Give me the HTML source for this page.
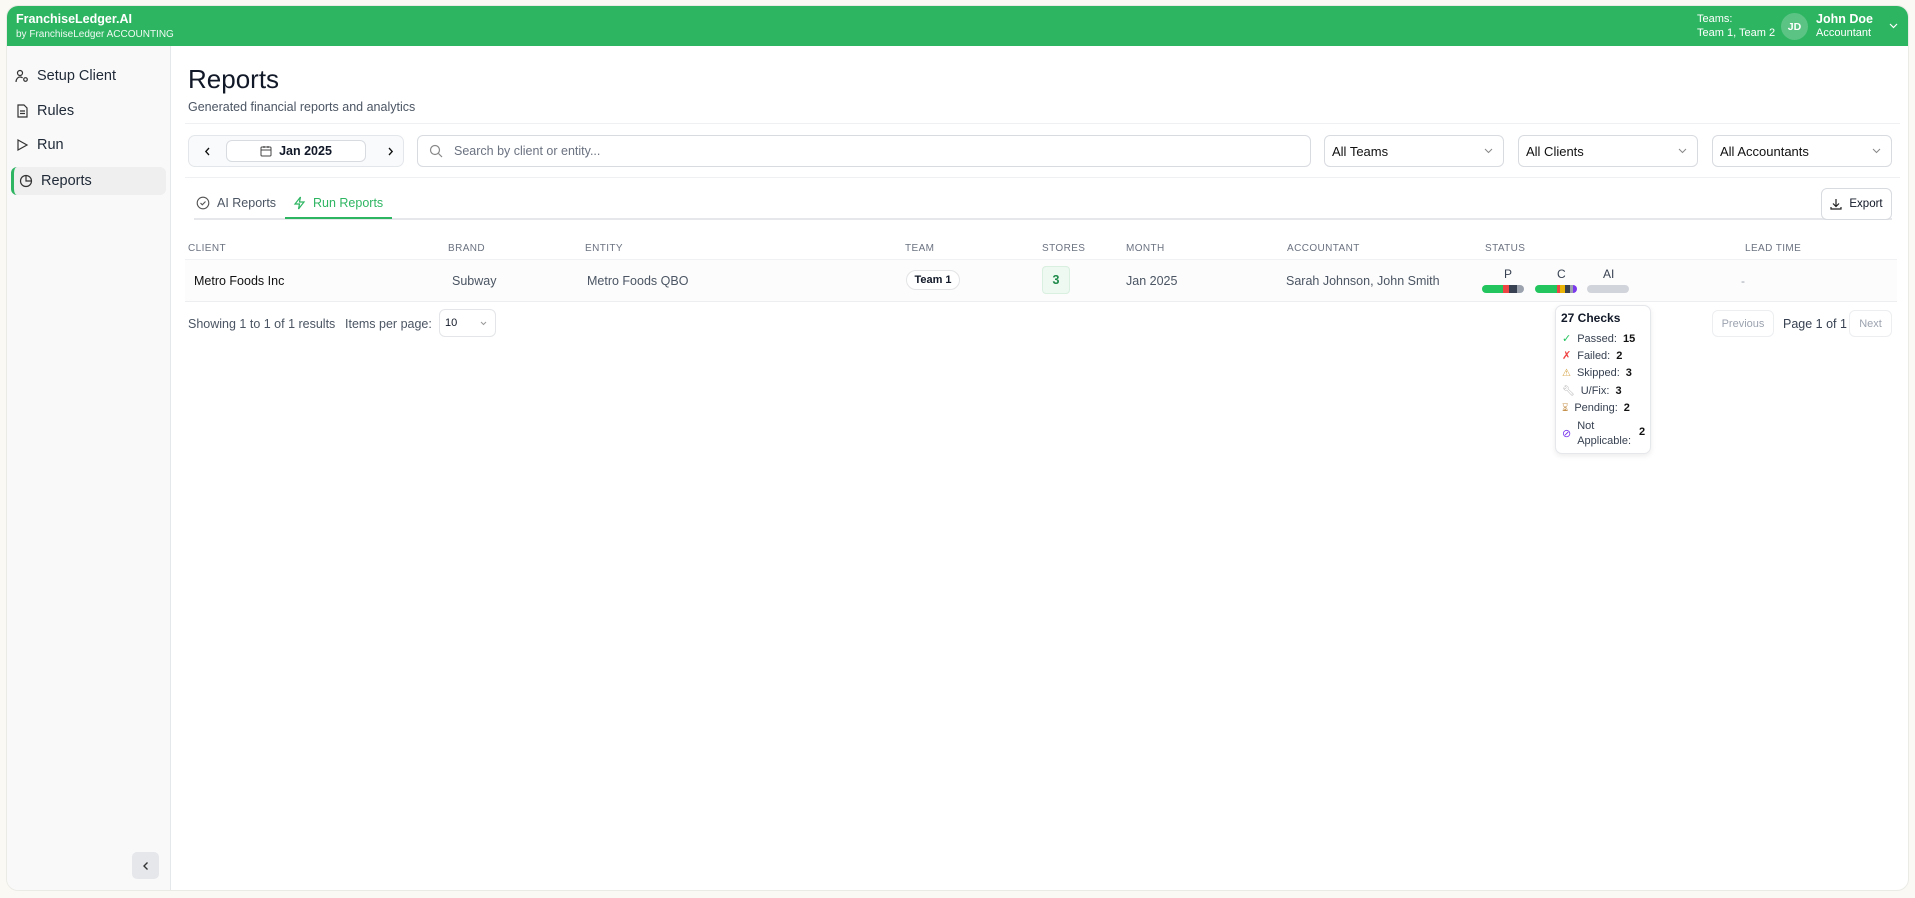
<!DOCTYPE html>
<html><head><meta charset="utf-8"><style>
*{box-sizing:border-box;margin:0;padding:0}
body{width:1915px;height:898px;background:#faf9f4;font-family:"Liberation Sans",sans-serif;color:#111827;position:relative;overflow:hidden;font-size:13px}
.a{position:absolute}
.frame{left:6px;top:5px;width:1903px;height:886px;background:#fff;border:1px solid #ebebe6;border-radius:12px;overflow:hidden}
.hdr{left:0;top:0;width:100%;height:40px;background:#2eb562;color:#fff}
.side{left:0;top:40px;width:164px;height:846px;background:#f9f9f9;border-right:1px solid #e5e7eb}
.nav{left:2px;height:28px;width:150px;display:flex;align-items:center;font-size:14.5px;color:#1f2937;padding-left:6px}
.nav svg{margin-right:8px}
.box{border:1px solid #d8dbe0;border-radius:6px;background:#fff}
.sel{display:flex;align-items:center;justify-content:space-between;padding:0 10px 0 7px;font-size:13px;color:#111}
.th{top:237px;font-size:10px;color:#6b7280;letter-spacing:.4px}
.td{top:268px;font-size:12.5px;color:#4b5563}
.bar{height:8px;border-radius:4px;overflow:hidden;display:flex}
.tt{font-size:11px;color:#374151;display:flex;align-items:center;gap:6px;position:absolute;left:6px}
.tt b{color:#111;font-weight:700}
</style></head><body>
<div class="a frame">
 <div class="a hdr">
  <div class="a" style="left:9px;top:6px;font-weight:700;font-size:12.5px">FranchiseLedger.AI</div>
  <div class="a" style="left:9px;top:23px;font-size:10px;opacity:.92">by FranchiseLedger ACCOUNTING</div>
  <div class="a" style="left:1690px;top:6px;font-size:11px;line-height:14px">Teams:<br>Team 1, Team 2</div>
  <div class="a" style="left:1774px;top:7px;width:27px;height:27px;border-radius:50%;background:#5bc484;font-size:10.5px;font-weight:700;display:flex;align-items:center;justify-content:center">JD</div>
  <div class="a" style="left:1809px;top:6px;font-size:12.5px;font-weight:700">John Doe</div>
  <div class="a" style="left:1809px;top:21px;font-size:11px">Accountant</div>
  <svg class="a" style="left:1882px;top:17px" width="9" height="6" viewBox="0 0 9 6"><path d="M1 1l3.5 3.5L8 1" stroke="#fff" fill="none" stroke-width="1.2"/></svg>
 </div>
 <div class="a side">
  <div class="a nav" style="top:16px"><svg width="14" height="14" viewBox="0 0 14 14" fill="none" stroke="#333" stroke-width="1.2"><circle cx="5" cy="4" r="2.5"/><path d="M1 13c0-3 2-5 4-5 1 0 2 .3 2.6 1"/><circle cx="10.5" cy="10.5" r="1.8"/></svg>Setup Client</div>
  <div class="a nav" style="top:51px"><svg width="14" height="14" viewBox="0 0 14 14" fill="none" stroke="#333" stroke-width="1.2"><path d="M3 1h6l3 3v9H3z"/><path d="M5 7h5M5 9.5h5"/></svg>Rules</div>
  <div class="a nav" style="top:85px"><svg width="14" height="14" viewBox="0 0 14 14" fill="none" stroke="#333" stroke-width="1.2"><path d="M3 2l9 5-9 5z"/></svg>Run</div>
  <div class="a" style="left:4px;top:121px;width:155px;height:28px;background:#efefef;border-radius:6px;border-left:3px solid #2eb562"></div>
  <div class="a nav" style="top:121px;left:6px"><svg width="14" height="14" viewBox="0 0 14 14" fill="none" stroke="#333" stroke-width="1.2"><circle cx="7" cy="7" r="5.5"/><path d="M7 1.5V7h5.5"/></svg>Reports</div>
  <div class="a" style="left:125px;top:806px;width:27px;height:27px;border-radius:5px;background:#e5e7eb;display:flex;align-items:center;justify-content:center"><svg width="8" height="10" viewBox="0 0 8 10"><path d="M5.5 1.5L2 5l3.5 3.5" stroke="#333" fill="none" stroke-width="1.4"/></svg></div>
 </div>
 <div class="a" style="left:181px;top:58px;font-size:26px;color:#111827">Reports</div>
 <div class="a" style="left:181px;top:94px;font-size:12.5px;color:#4b5563">Generated financial reports and analytics</div>
 <div class="a" style="left:178px;top:117px;width:1715px;border-top:1px solid #eef0f2"></div>
 <div class="a" style="left:181px;top:129px;width:216px;height:32px;background:#f8fafb;border:1px solid #e3e6ea;border-radius:7px"></div>
 <svg class="a" style="left:197px;top:141px" width="7" height="9" viewBox="0 0 7 9"><path d="M5 1L1.8 4.5 5 8" stroke="#111" fill="none" stroke-width="1.3"/></svg>
 <div class="a box" style="left:219px;top:134px;width:140px;height:22px;display:flex;align-items:center;justify-content:center;gap:7px;font-size:12.5px;font-weight:600"><svg width="12" height="12" viewBox="0 0 12 12" fill="none" stroke="#444" stroke-width="1"><rect x="1" y="2" width="10" height="9" rx="1"/><path d="M1 5h10M4 1v2M8 1v2"/></svg>Jan 2025</div>
 <svg class="a" style="left:380px;top:141px" width="7" height="9" viewBox="0 0 7 9"><path d="M2 1l3.2 3.5L2 8" stroke="#111" fill="none" stroke-width="1.3"/></svg>
 <div class="a box" style="left:410px;top:129px;width:894px;height:32px;display:flex;align-items:center;padding-left:11px;font-size:12.5px;color:#6b7280"><svg width="14" height="14" viewBox="0 0 14 14" fill="none" stroke="#888" stroke-width="1.2" style="margin-right:11px"><circle cx="6" cy="6" r="4.5"/><path d="M9.5 9.5L13 13"/></svg>Search by client or entity...</div>
 <div class="a box sel" style="left:1317px;top:129px;width:180px;height:32px">All Teams<svg width="9" height="6"><path d="M1 1l3.5 3.5L8 1" stroke="#888" fill="none"/></svg></div>
 <div class="a box sel" style="left:1511px;top:129px;width:180px;height:32px">All Clients<svg width="9" height="6"><path d="M1 1l3.5 3.5L8 1" stroke="#888" fill="none"/></svg></div>
 <div class="a box sel" style="left:1705px;top:129px;width:180px;height:32px">All Accountants<svg width="9" height="6"><path d="M1 1l3.5 3.5L8 1" stroke="#888" fill="none"/></svg></div>
 <div class="a" style="left:178px;top:171px;width:1715px;border-top:1px solid #eef0f2"></div>
 <div class="a" style="left:187px;top:212px;width:1698px;border-top:2px solid #e5e7eb"></div>
 <div class="a" style="left:278px;top:211px;width:107px;border-top:2px solid #2eb562"></div>
 <div class="a" style="left:189px;top:190px;font-size:12.5px;color:#4b5563;display:flex;align-items:center;gap:7px"><svg width="14" height="14" viewBox="0 0 14 14" fill="none" stroke="#555" stroke-width="1.1"><circle cx="7" cy="7" r="5.8"/><path d="M4.5 7l1.8 1.8L9.5 5.5"/></svg>AI Reports</div>
 <div class="a" style="left:286px;top:190px;font-size:12.5px;color:#2eb562;display:flex;align-items:center;gap:7px"><svg width="13" height="14" viewBox="0 0 13 14" fill="none" stroke="#2eb562" stroke-width="1.2"><path d="M7.5 1L2 8h4.5L5.5 13 11 6H6.5z"/></svg>Run Reports</div>
 <div class="a box" style="left:1814px;top:182px;width:71px;height:32px;display:flex;align-items:center;justify-content:center;gap:7px;font-size:11.5px"><svg width="12" height="12" viewBox="0 0 12 12" fill="none" stroke="#222" stroke-width="1.2"><path d="M6 1v7M3 5.5L6 8.5 9 5.5M1 9v2h10V9"/></svg>Export</div>
 <div class="a th" style="left:181px">CLIENT</div>
 <div class="a th" style="left:441px">BRAND</div>
 <div class="a th" style="left:578px">ENTITY</div>
 <div class="a th" style="left:898px">TEAM</div>
 <div class="a th" style="left:1035px">STORES</div>
 <div class="a th" style="left:1119px">MONTH</div>
 <div class="a th" style="left:1280px">ACCOUNTANT</div>
 <div class="a th" style="left:1478px">STATUS</div>
 <div class="a th" style="left:1738px">LEAD TIME</div>
 <div class="a" style="left:178px;top:253px;width:1712px;height:43px;background:#fcfcfc;border-top:1px solid #f0f1f3;border-bottom:1px solid #eceef0"></div>
 <div class="a td" style="left:187px;color:#111">Metro Foods Inc</div>
 <div class="a td" style="left:445px">Subway</div>
 <div class="a td" style="left:580px">Metro Foods QBO</div>
 <div class="a" style="left:899px;top:264px;width:54px;height:20px;border:1px solid #e3e4e6;border-radius:10px;background:#fff;font-size:11px;font-weight:700;display:flex;align-items:center;justify-content:center">Team 1</div>
 <div class="a" style="left:1035px;top:260px;width:28px;height:28px;border:1px solid #d9efe0;border-radius:4px;background:#edf9f1;color:#1f8a4a;font-size:12.5px;font-weight:600;display:flex;align-items:center;justify-content:center">3</div>
 <div class="a td" style="left:1119px">Jan 2025</div>
 <div class="a td" style="left:1279px">Sarah Johnson, John Smith</div>
 <div class="a" style="left:1497px;top:261px;font-size:12px;color:#374151">P</div>
 <div class="a" style="left:1550px;top:261px;font-size:12px;color:#374151">C</div>
 <div class="a" style="left:1596px;top:261px;font-size:12px;color:#374151">AI</div>
 <div class="a bar" style="left:1475px;top:279px;width:42px"><i style="flex:21;background:#22c55e"></i><i style="flex:6;background:#ef4444"></i><i style="flex:8;background:#374151"></i><i style="flex:7;background:#9ca3af"></i></div>
 <div class="a bar" style="left:1528px;top:279px;width:42px"><i style="flex:22;background:#22c55e"></i><i style="flex:3;background:#ef4444"></i><i style="flex:5;background:#eab308"></i><i style="flex:5;background:#374151"></i><i style="flex:3;background:#9ca3af"></i><i style="flex:4;background:#7c3aed"></i></div>
 <div class="a bar" style="left:1580px;top:279px;width:42px;background:#d1d5db"></div>
 <div class="a" style="left:1734px;top:268px;font-size:12px;color:#9ca3af">-</div>
 <div class="a" style="left:181px;top:311px;font-size:12.5px;color:#4b5563">Showing 1 to 1 of 1 results</div>
 <div class="a" style="left:338px;top:311px;font-size:12.5px;color:#4b5563">Items per page:</div>
 <div class="a box" style="left:432px;top:303px;width:57px;height:28px;display:flex;align-items:center;justify-content:space-between;padding:0 8px 0 5px;font-size:11px;border-color:#e3e5e8">10<svg width="7" height="5"><path d="M1 1l2.5 2.5L6 1" stroke="#999" fill="none"/></svg></div>
 <div class="a box" style="left:1705px;top:304px;width:62px;height:27px;font-size:11px;color:#9ca3af;display:flex;align-items:center;justify-content:center;border-color:#eceef0">Previous</div>
 <div class="a" style="left:1776px;top:311px;font-size:12.5px;color:#374151">Page 1 of 1</div>
 <div class="a box" style="left:1842px;top:304px;width:43px;height:27px;font-size:11px;color:#9ca3af;display:flex;align-items:center;justify-content:center;border-color:#eceef0">Next</div>
 <div class="a" style="left:1548px;top:299px;width:96px;height:149px;background:#fff;border:1px solid #e5e7eb;border-radius:7px;box-shadow:0 2px 6px rgba(0,0,0,.08)">
  <div class="a" style="left:5px;top:5px;font-size:12px;font-weight:700">27 Checks</div>
  <div class="tt" style="top:26px"><span style="color:#22c55e">✓</span>Passed: <b>15</b></div>
  <div class="tt" style="top:43px"><span style="color:#ef4444">✗</span>Failed: <b>2</b></div>
  <div class="tt" style="top:61px"><span style="color:#d4a040;font-size:10px">⚠</span>Skipped: <b>3</b></div>
  <div class="tt" style="top:79px"><span style="color:#aaa;font-size:10px">🔧︎</span>U/Fix: <b>3</b></div>
  <div class="tt" style="top:96px"><span style="color:#c4904a;font-size:10px">⏳︎</span>Pending: <b>2</b></div>
  <div class="tt" style="top:113px;line-height:15px"><span style="color:#7c3aed">⊘</span><span>Not<br>Applicable:</span><b style="margin-left:2px;margin-top:-4px">2</b></div>
 </div>
</div>
</body></html>
